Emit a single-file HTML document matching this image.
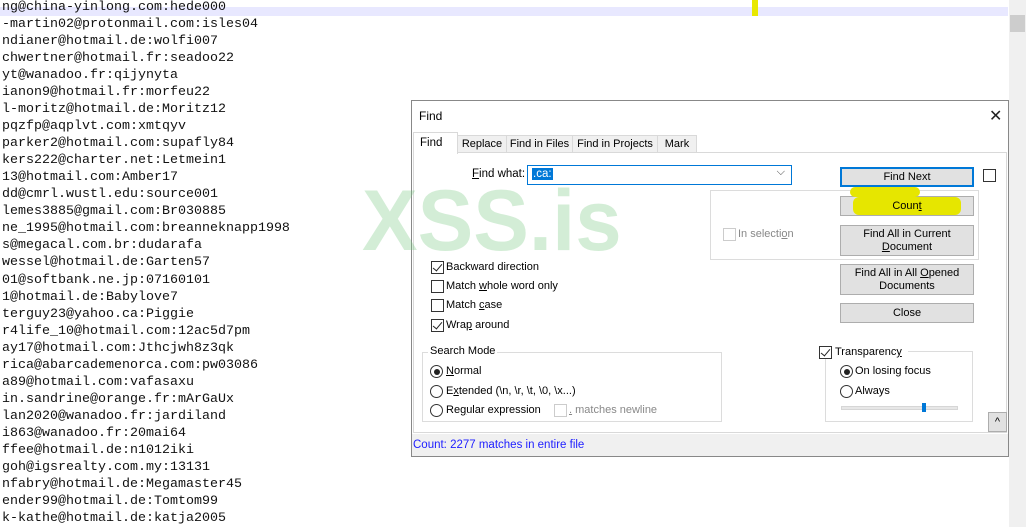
<!DOCTYPE html><html><head><meta charset="utf-8"><style>
*{margin:0;padding:0;box-sizing:border-box}
body{width:1027px;height:527px;overflow:hidden;background:#fff;position:relative;font-family:"Liberation Sans",sans-serif}
.ed{position:absolute;left:2px;top:-1px;font-family:"Liberation Mono",monospace;font-size:13.33px;line-height:17.03px;color:#111;white-space:pre}
.hl{position:absolute;left:0;top:7px;width:1008px;height:9px;background:#e8e8ff}
.cur{position:absolute;left:752px;top:0;width:6px;height:16px;background:#e8e800}
.sb{position:absolute;left:1009px;top:0;width:17px;height:527px;background:#f0f0f0}
.th{position:absolute;left:1010px;top:15px;width:15px;height:17px;background:#cdcdcd}
.dlg{position:absolute;left:411px;top:100px;width:598px;height:357px;background:#fff;border:1px solid #888}
.a{position:absolute;font-size:11.5px;color:#000;white-space:nowrap}
.tab{position:absolute;top:34px;height:18px;border:1px solid #d9d9d9;background:#f0f0f0;font-size:11px;text-align:center;line-height:16px}
.btn{position:absolute;left:428px;width:134px;background:#e1e1e1;border:1px solid #adadad;font-size:11px;text-align:center;line-height:13px}
.cb{position:absolute;width:13px;height:13px;border:1px solid #333;background:#fff}
.cb.k::after{content:"";position:absolute;left:3px;top:0px;width:4px;height:8px;border:solid #222;border-width:0 1.3px 1.3px 0;transform:rotate(40deg)}
.rd{position:absolute;width:13px;height:13px;border:1px solid #333;border-radius:50%;background:#fff}
.rd.k::after{content:"";position:absolute;left:2.5px;top:2.5px;width:6px;height:6px;border-radius:50%;background:#222}
.grp{position:absolute;border:1px solid #dcdcdc}
u{text-decoration:underline}
</style></head><body>
<div class="hl"></div><div class="cur"></div>
<div class="ed">ng@china-yinlong.com:hede000
-martin02@protonmail.com:isles04
ndianer@hotmail.de:wolfi007
chwertner@hotmail.fr:seadoo22
yt@wanadoo.fr:qijynyta
ianon9@hotmail.fr:morfeu22
l-moritz@hotmail.de:Moritz12
pqzfp@aqplvt.com:xmtqyv
parker2@hotmail.com:supafly84
kers222@charter.net:Letmein1
13@hotmail.com:Amber17
dd@cmrl.wustl.edu:source001
lemes3885@gmail.com:Br030885
ne_1995@hotmail.com:breanneknapp1998
s@megacal.com.br:dudarafa
wessel@hotmail.de:Garten57
01@softbank.ne.jp:07160101
1@hotmail.de:Babylove7
terguy23@yahoo.ca:Piggie
r4life_10@hotmail.com:12ac5d7pm
ay17@hotmail.com:Jthcjwh8z3qk
rica@abarcademenorca.com:pw03086
a89@hotmail.com:vafasaxu
in.sandrine@orange.fr:mArGaUx
lan2020@wanadoo.fr:jardiland
i863@wanadoo.fr:20mai64
ffee@hotmail.de:n1012iki
goh@igsrealty.com.my:13131
nfabry@hotmail.de:Megamaster45
ender99@hotmail.de:Tomtom99
k-kathe@hotmail.de:katja2005</div>
<div class="sb"></div><div class="th"></div>
<div class="dlg">
<div class="a" style="left:7px;top:8px;font-size:12px">Find</div>
<div class="a" style="left:577px;top:5px;font-size:16px;color:#222">✕</div>
<div style="position:absolute;left:1px;top:51px;width:594px;height:281px;border:1px solid #d9d9d9"></div>
<div class="tab" style="left:45px;width:50px">Replace</div>
<div class="tab" style="left:94px;width:67px">Find in Files</div>
<div class="tab" style="left:160px;width:86px">Find in Projects</div>
<div class="tab" style="left:245px;width:40px">Mark</div>
<div style="position:absolute;left:1px;top:31px;width:45px;height:22px;background:#fff;border:1px solid #d9d9d9;border-bottom:none;font-size:11.5px;padding:4px 0 0 6px">Find</div>
<div class="a" style="left:60px;top:67px"><u>F</u>ind what:</div>
<div style="position:absolute;left:115px;top:64px;width:265px;height:20px;border:1px solid #0078d7"><span style="position:absolute;left:4px;top:2px;background:#0078d7;color:#fff;font-size:11.5px;padding:0 1px">.ca:</span><span style="position:absolute;right:6px;top:0px;font-size:11px;color:#444">⌵</span></div>
<div class="grp" style="left:298px;top:89px;width:269px;height:70px"></div>
<div class="btn" style="top:66px;height:20px;border:2px solid #0078d7;line-height:16px">Find Next</div>
<div class="cb" style="left:571px;top:68px"></div>
<div class="btn" style="top:95px;height:20px;line-height:18px"><span style="background:#e6e600;display:inline-block;width:108px;border-radius:6px">Coun<u>t</u></span></div>
<div style="position:absolute;left:438px;top:86px;width:70px;height:10px;background:#e6e600;border-radius:5px"></div>
<div class="btn" style="top:124px;height:31px;padding-top:2px">Find All in Current<br><u>D</u>ocument</div>
<div class="cb" style="left:311px;top:127px;border-color:#ccc"></div>
<div class="a" style="left:326px;top:127px;color:#888;font-size:11px">In selecti<u>o</u>n</div>
<div class="btn" style="top:163px;height:31px;padding-top:2px">Find All in All <u>O</u>pened<br>Documents</div>
<div class="btn" style="top:202px;height:20px;line-height:18px">Close</div>
<div class="cb k" style="left:19px;top:160px"></div><div class="a" style="left:34px;top:160px;font-size:11px">Backward direction</div>
<div class="cb" style="left:19px;top:179px"></div><div class="a" style="left:34px;top:179px;font-size:11px">Match <u>w</u>hole word only</div>
<div class="cb" style="left:19px;top:198px"></div><div class="a" style="left:34px;top:198px;font-size:11px">Match <u>c</u>ase</div>
<div class="cb k" style="left:19px;top:218px"></div><div class="a" style="left:34px;top:218px;font-size:11px">Wra<u>p</u> around</div>
<div class="grp" style="left:10px;top:251px;width:300px;height:70px"></div>
<div class="a" style="left:16px;top:244px;background:#fff;padding:0 2px;font-size:11px">Search Mode</div>
<div class="rd k" style="left:18px;top:264px"></div><div class="a" style="left:34px;top:264px;font-size:11px"><u>N</u>ormal</div>
<div class="rd" style="left:18px;top:284px"></div><div class="a" style="left:34px;top:284px;font-size:11px">E<u>x</u>tended (\n, \r, \t, \0, \x...)</div>
<div class="rd" style="left:18px;top:303px"></div><div class="a" style="left:34px;top:303px;font-size:11px">Re<u>g</u>ular expression</div>
<div class="cb" style="left:142px;top:303px;border-color:#ccc"></div><div class="a" style="left:157px;top:303px;color:#888;font-size:11px"><u>.</u> matches newline</div>
<div class="grp" style="left:413px;top:250px;width:148px;height:71px"></div>
<div style="position:absolute;left:406px;top:244px;width:90px;height:14px;background:#fff"></div>
<div class="cb k" style="left:407px;top:245px"></div><div class="a" style="left:423px;top:245px;font-size:11px">Transparenc<u>y</u></div>
<div class="rd k" style="left:428px;top:264px"></div><div class="a" style="left:443px;top:264px;font-size:11px">On losing focus</div>
<div class="rd" style="left:428px;top:284px"></div><div class="a" style="left:443px;top:284px;font-size:11px">Always</div>
<div style="position:absolute;left:429px;top:305px;width:117px;height:4px;background:#e7e7e7;border:1px solid #d6d6d6"></div>
<div style="position:absolute;left:510px;top:302px;width:4px;height:9px;background:#0078d7"></div>
<div style="position:absolute;left:576px;top:311px;width:19px;height:20px;background:#e1e1e1;border:1px solid #adadad;font-size:11px;text-align:center;line-height:18px">^</div>
<div style="position:absolute;left:0;top:333px;width:596px;height:22px;background:#f0f0f0"></div>
<div class="a" style="left:1px;top:338px;color:#2020ff;font-size:11.5px">Count: 2277 matches in entire file</div>
</div>
<div style="position:absolute;left:362px;top:172px;font-family:'Liberation Sans',sans-serif;font-weight:bold;font-size:86px;color:rgba(120,200,130,0.33);transform:scaleX(0.97);transform-origin:left">XSS.is</div>
</body></html>
